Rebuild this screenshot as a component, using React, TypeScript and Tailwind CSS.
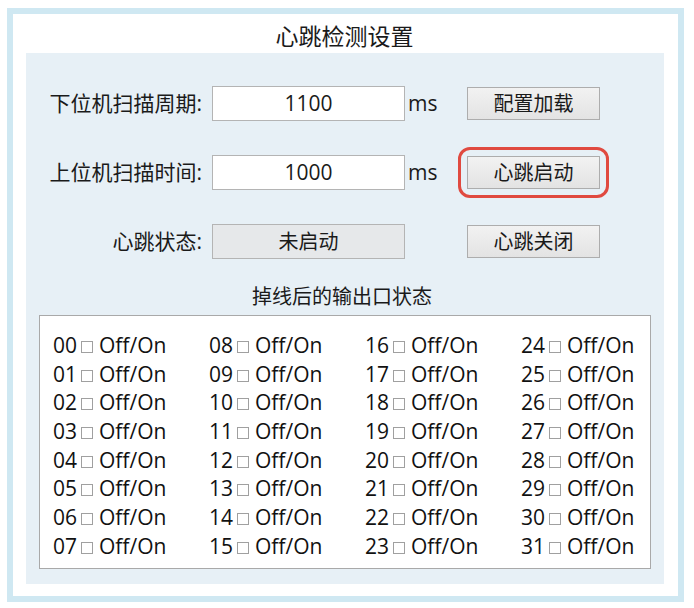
import React from 'react';

const font = {
  fontFamily: '"Open Sans", "Noto Sans CJK SC", sans-serif',
};

function Btn({ label }: { label: string }) {
  return (
    <button className="w-[133px] h-[33px] border border-[#adadad] bg-gradient-to-b from-[#f2f2f2] to-[#e3e3e3] text-[20px] text-[#1a1a1a] leading-none">
      {label}
    </button>
  );
}

function Row({
  label,
  children,
  right,
}: {
  label: string;
  children: React.ReactNode;
  right: React.ReactNode;
}) {
  return (
    <div className="flex items-center h-[35px]">
      <div className="w-[176px] text-right text-[21px] text-[#1a1a1a] whitespace-nowrap">
        {label}
      </div>
      <div className="ml-[10px]">{children}</div>
      {right}
    </div>
  );
}

export default function App() {
  const cols = [0, 8, 16, 24];
  const rows = [0, 1, 2, 3, 4, 5, 6, 7];

  return (
    <div className="w-[694px] h-[608px] bg-white pt-[8px] pl-[7px]" style={font}>
      <div className="w-[677px] h-[594px] border-[6px] border-[#cfe8f2] bg-white flex flex-col">
        <div className="h-[39px] flex items-end justify-center text-[23px] text-[#1a1a1a] leading-none pb-[5px] pr-[2px]">
          心跳检测设置
        </div>
        <div className="ml-[13px] w-[638px] h-[531px] bg-[#e7f0f6] flex flex-col pt-[33px]">
          <Row
            label="下位机扫描周期:"
            right={
              <>
                <span className="w-[62px] pl-[3px] text-[21px] text-[#1a1a1a]">ms</span>
                <Btn label="配置加载" />
              </>
            }
          >
            <div className="w-[193px] h-[35px] bg-white border border-[#b4b4b4] flex items-center justify-center text-[21px] text-[#1a1a1a]">
              1100
            </div>
          </Row>

          <div className="h-[34px]" />
          <Row
            label="上位机扫描时间:"
            right={
              <>
                <span className="w-[62px] pl-[3px] text-[21px] text-[#1a1a1a]">ms</span>
                <div className="rounded-[3px] outline-[3px] outline-solid outline-[#e04a40] outline-offset-[6px]">
                  <Btn label="心跳启动" />
                </div>
              </>
            }
          >
            <div className="w-[193px] h-[35px] bg-white border border-[#b4b4b4] flex items-center justify-center text-[21px] text-[#1a1a1a]">
              1000
            </div>
          </Row>

          <div className="h-[34px]" />
          <Row
            label="心跳状态:"
            right={
              <>
                <span className="w-[62px]" />
                <Btn label="心跳关闭" />
              </>
            }
          >
            <div className="w-[193px] h-[35px] bg-[#e6e8ea] border border-[#b4b4b4] flex items-center justify-center text-[20px] text-[#1a1a1a]">
              未启动
            </div>
          </Row>

          <div className="mt-[28px] text-center text-[20px] text-[#1a1a1a] leading-none pr-[6px]">
            掉线后的输出口状态
          </div>
          <div className="mt-[8px] ml-[13px] w-[612px] h-[254px] bg-white border border-[#a9a9a9] pl-[13px] pt-[15px]">
            <div className="grid grid-cols-4 w-[624px]">
              {cols.map((c) => (
                <div key={c} className="flex flex-col">
                  {rows.map((r) => {
                    const n = String(c + r).padStart(2, '0');
                    return (
                      <div
                        key={n}
                        className="h-[28.7px] flex items-center text-[21px] text-[#111] leading-none"
                      >
                        <span>{n}</span>
                        <span className="ml-[4px] mr-[6px] w-[12px] h-[12px] border border-[#a0a0a0] bg-white mt-[3px]" />
                        <span>Off/On</span>
                      </div>
                    );
                  })}
                </div>
              ))}
            </div>
          </div>
        </div>
      </div>
    </div>
  );
}
